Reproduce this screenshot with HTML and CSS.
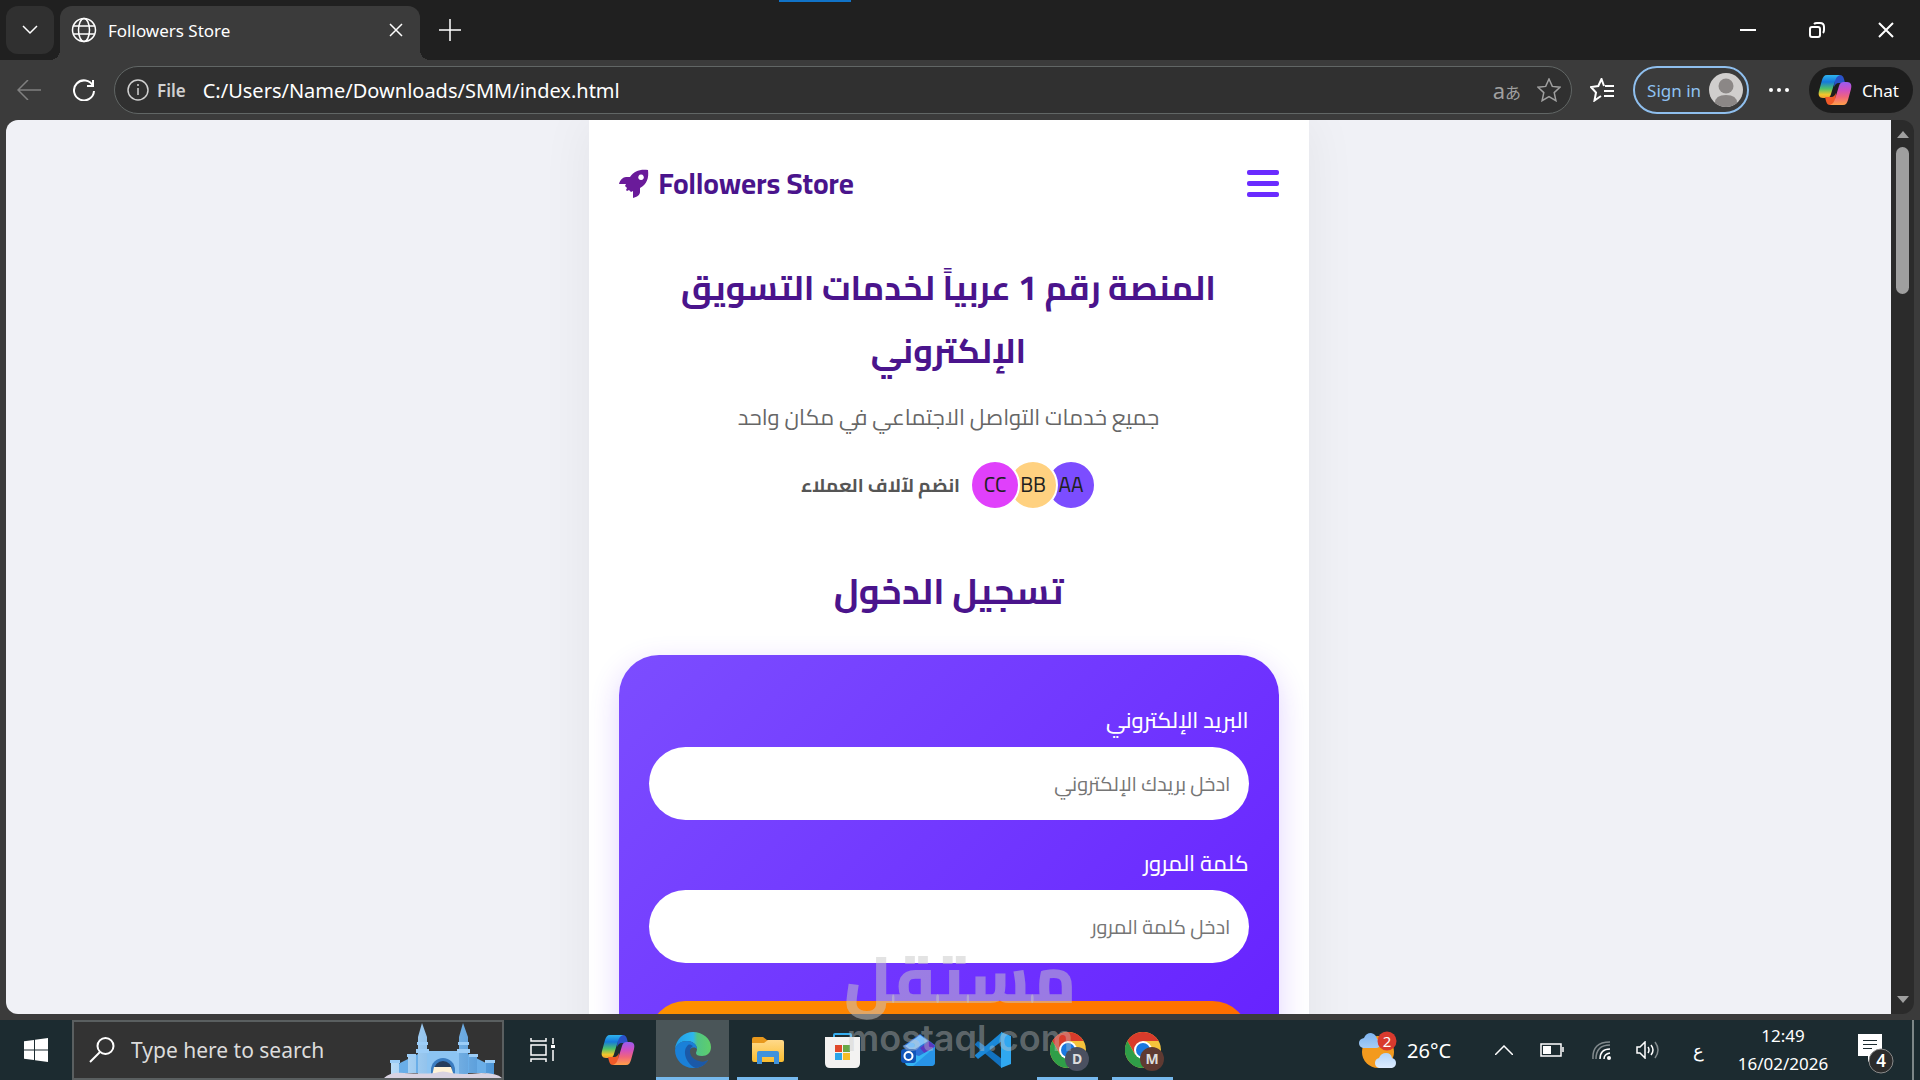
FILE: index.html
```html
<!DOCTYPE html>
<html lang="en">
<head>
<meta charset="utf-8">
<meta name="viewport" content="width=device-width, initial-scale=1">
<title>Followers Store</title>
<link rel="stylesheet" href="styles.css">
</head>
<body>
<svg class="defs" aria-hidden="true">
  <defs>
    <linearGradient id="cp-left" x1="0" y1="0" x2="0" y2="1"><stop offset="0" stop-color="#2fb4ee"/><stop offset=".3" stop-color="#1579dc"/><stop offset=".6" stop-color="#4fc268"/><stop offset=".85" stop-color="#f2c62c"/><stop offset="1" stop-color="#f0a030"/></linearGradient>
    <linearGradient id="cp-right" x1="0" y1="0" x2="0" y2="1"><stop offset="0" stop-color="#9a5cf0"/><stop offset=".35" stop-color="#d04fc0"/><stop offset=".65" stop-color="#f0657c"/><stop offset="1" stop-color="#ffa048"/></linearGradient>
    <linearGradient id="edge-top" x1="0" y1="0" x2="1" y2="0"><stop offset="0" stop-color="#1f9fe8"/><stop offset=".5" stop-color="#2eb5ef"/><stop offset=".62" stop-color="#50c486"/><stop offset="1" stop-color="#5fcf6a"/></linearGradient>
    <linearGradient id="folder" x1="0" y1="0" x2="0" y2="1"><stop offset="0" stop-color="#ffd98a"/><stop offset="1" stop-color="#fbbd2e"/></linearGradient>
    <linearGradient id="tower" x1="0" y1="0" x2="1" y2="0"><stop offset="0" stop-color="#b9dcf8"/><stop offset="1" stop-color="#4b94d6"/></linearGradient>
    <linearGradient id="cloud" x1="0" y1="0" x2="0" y2="1"><stop offset="0" stop-color="#7db4f0"/><stop offset="1" stop-color="#dcecff"/></linearGradient>
    <symbol id="copilot" viewBox="0 0 34 32">
      <path fill="#2a52c8" d="M17 1h5c2 0 3 1 4 4l1 4h-6c-3 0-4 2-5 4z"/>
      <path fill="url(#cp-left)" d="M9 1h13c-3 1-4 3-5 6l-4 13c-1 3-2 4-5 4H5c-4 0-5-3-4-7L4 6c1-3 2-5 5-5z"/>
      <path fill="#f05a28" d="M17 31h-5c-2 0-3-1-4-4l-1-4h6c3 0 4-2 5-4z"/>
      <path fill="url(#cp-right)" d="M25 31H12c3-1 4-3 5-6l4-13c1-3 2-4 5-4h3c4 0 5 3 4 7l-3 11c-1 3-2 5-5 5z"/>
    </symbol>
    <symbol id="chrome" viewBox="0 0 36 36">
      <circle cx="18" cy="18" r="18" fill="#f5c33b"/>
      <path fill="#d93b2b" d="M2.400 9A18 18 0 0 1 33.600 9H18L10 22z"/>
      <path fill="#2f9e48" d="M2.400 9A18 18 0 0 0 18 36l8-13.500-16 0z"/>
      <circle cx="18" cy="18" r="9" fill="#fff"/><circle cx="18" cy="18" r="7" fill="#1a78e0"/>
    </symbol>
  </defs>
</svg>

<header class="tabstrip">
  <button class="tab-list" aria-label="Tab actions"><svg width="16" height="10" viewBox="0 0 16 10"><path class="line" d="M1 1l7 7 7-7"/></svg></button>
  <div class="tab">
    <svg width="26" height="26" viewBox="0 0 26 26"><g class="line"><circle cx="13" cy="13" r="11.500"/><ellipse cx="13" cy="13" rx="5.500" ry="11.500"/><path d="M2.500 9h21M2.500 17h21"/></g></svg>
    <span class="tab-title">Followers Store</span>
    <button class="plain" aria-label="Close tab"><svg width="14" height="14" viewBox="0 0 14 14"><path class="line" d="M1 1l12 12M13 1L1 13"/></svg></button>
  </div>
  <button class="plain new-tab" aria-label="New tab"><svg width="22" height="22" viewBox="0 0 22 22"><path class="line" d="M11 0v22M0 11h22"/></svg></button>
  <div class="window-controls">
    <button class="plain" aria-label="Minimize"><svg width="16" height="16" viewBox="0 0 16 16"><path class="line bold" d="M0 8h16"/></svg></button>
    <button class="plain" aria-label="Restore"><svg width="16" height="16" viewBox="0 0 16 16"><g class="line bold"><rect x="1" y="5" width="10" height="10" rx="2"/><path d="M5 2q1-1 3-1h3q4 0 4 4v3q0 2-1 3"/></g></svg></button>
    <button class="plain" aria-label="Close"><svg width="16" height="16" viewBox="0 0 16 16"><path class="line bold" d="M1 1l14 14M15 1L1 15"/></svg></button>
  </div>
  <span class="drag-mark"></span>
</header>

<nav class="toolbar">
  <button class="plain back" aria-label="Back"><svg width="24" height="20" viewBox="0 0 24 20"><path class="line" d="M24 10H1M11 0L1 10l10 10"/></svg></button>
  <button class="plain reload" aria-label="Reload"><svg width="22" height="22" viewBox="0 0 22 22"><path class="line bold" d="M20 7A10 10 0 1 0 21 12M20 1v6h-6"/></svg></button>
  <div class="address">
    <svg width="22" height="22" viewBox="0 0 22 22"><g class="line"><circle cx="11" cy="11" r="10"/><path d="M11 9v7M11 5v2"/></g></svg>
    <span class="scheme">File</span>
    <input class="url" type="text" aria-label="Address" value="C:/Users/Name/Downloads/SMM/index.html">
    <span class="translate">a<small>あ</small></span>
    <button class="plain dim" aria-label="Add to favorites"><svg width="24" height="24" viewBox="0 0 24 24"><path class="line" d="M12 1l3.300 7.400 7.700.8-5.800 5.400 1.700 8.100L12 18.600l-6.900 4.100 1.700-8.100L1 9.200l7.700-.8z"/></svg></button>
  </div>
  <button class="plain favorites" aria-label="Favorites"><svg width="25" height="24" viewBox="0 0 25 24"><path class="line bold" d="M14 8l-2.500-7-3.200 7L1 9l5 5.500-1.500 8L11 18M15 8h9M14 13h10M14 18h10"/></svg></button>
  <button class="signin">Sign in<svg width="34" height="34" viewBox="0 0 34 34"><circle cx="17" cy="17" r="17" fill="#d0cecd"/><circle cx="17" cy="13" r="7.500" fill="#8b8786"/><path fill="#8b8786" d="M6 30q0-8 11-8t11 8q-5 4-11 4T6 30z"/></svg></button>
  <button class="plain more" aria-label="Settings and more"><svg width="20" height="4" viewBox="0 0 20 4" fill="#fff"><circle cx="2" cy="2" r="2"/><circle cx="10" cy="2" r="2"/><circle cx="18" cy="2" r="2"/></svg></button>
  <button class="chat"><svg width="34" height="32"><use href="#copilot"/></svg>Chat</button>
</nav>

<div class="viewport">
  <div class="page" dir="rtl" lang="ar">
    <main class="app">
      <div class="app-head">
        <button class="menu" aria-label="القائمة"><i></i><i></i><i></i></button>
        <a class="brand" href="#" dir="ltr"><svg width="30" height="30" viewBox="0 0 30 30"><path fill="#6a1b9a" fill-rule="evenodd" d="M29 1c1 8-1 14-8 18v4c0 3-3 5-7 6v-7l-2 1-2-2-2 1-1-1 1-2-2-2 1-2H0c1-4 4-7 7-7h4C15 2 21 0 29 1zM22 5.500a2.800 2.800 0 1 0 .1 0z"/></svg>Followers Store</a>
      </div>
      <section class="hero">
        <h1>المنصة رقم 1 عربياً لخدمات التسويق الإلكتروني</h1>
        <p class="lead">جميع خدمات التواصل الاجتماعي في مكان واحد</p>
        <div class="social">
          <div class="avatars"><span class="avatar violet">AA</span><span class="avatar amber">BB</span><span class="avatar pink">CC</span></div>
          <span class="join">انضم لآلاف العملاء</span>
        </div>
      </section>
      <h2>تسجيل الدخول</h2>
      <form class="login">
        <label for="email">البريد الإلكتروني</label>
        <input id="email" type="text" placeholder="ادخل بريدك الإلكتروني">
        <label for="password">كلمة المرور</label>
        <input id="password" type="password" placeholder="ادخل كلمة المرور">
        <button type="button" aria-label="دخول"></button>
      </form>
    </main>
  </div>
  <div class="scrollbar">
    <svg width="12" height="7" viewBox="0 0 12 7"><path fill="#9f9f9f" d="M6 0l6 7H0z"/></svg>
    <span class="thumb"></span>
    <svg width="12" height="7" viewBox="0 0 12 7"><path fill="#9f9f9f" d="M0 0h12L6 7z"/></svg>
  </div>
</div>

<footer class="taskbar">
  <button class="plain start" aria-label="Start"><svg width="24" height="24" viewBox="0 0 24 24" fill="#fff"><path d="M0 3.300L10 2v9.500H0zM11 1.800L24 0v11.500H11zM0 12.500h10V22L0 20.700zM11 12.500h13V24l-13-1.800z"/></svg></button>
  <div class="search">
    <svg width="26" height="26" viewBox="0 0 26 26"><g class="line bold"><circle cx="16.500" cy="9" r="8"/><path d="M11 15L1 25"/></g></svg>
    <input type="text" aria-label="Search" placeholder="Type here to search">
    <svg class="castle" width="118" height="55" viewBox="0 0 118 55">
      <path fill="#8cc4f2" d="M34 28h48v24H34z"/><path fill="#6aaee8" d="M8 44l26-13v19H8zM110 44L84 31v19h26z"/>
      <path fill="url(#tower)" d="M7 38h8v13H7zM24 32h8v18h-8zM85 32h8v18h-8zM102 38h8v13h-8zM34 17h9v34h-9zM75 17h9v34h-9zM38 0l5 14v5h-9v-5zM79 0l5 14v5h-9v-5z"/>
      <path fill="#9ccdf7" d="M6 37h10v3H6zM23 31h9v3h-9zM85 31h9v3h-9zM101 37h10v3h-10zM33 19h11v3H33zM32 26h13v4H32zM74 19h11v3H74zM73 26h13v4H73z"/>
      <path fill="#3a7cc0" d="M47 51V47a12 12 0 0 1 24 0v4z"/><path fill="#263d5c" d="M50 51v-4a9 9 0 0 1 18 0v4z"/><path fill="#fff3d8" d="M50 44h17l3 9H48z"/>
      <path fill="#d9d3e2" d="M0 55q6-6 20-5 20 1 31 0 8-3 16 0 12 2 30 0 16 0 21 5z"/>
    </svg>
  </div>
  <div class="apps">
    <button class="app-btn" aria-label="Task View"><svg width="25" height="24" viewBox="0 0 25 24"><path class="line" d="M1 0v3h15V0M1 24v-3h15v3M1 7h15v10H1zM23 0v6M23 12v11"/><path fill="#fff" d="M21 7h4v3h-4z"/></svg></button>
    <button class="app-btn" aria-label="Copilot"><svg width="34" height="32"><use href="#copilot"/></svg></button>
    <button class="app-btn running active" aria-label="Microsoft Edge"><svg width="36" height="36" viewBox="0 0 36 36">
      <path fill="url(#edge-top)" d="M0 17C1 7 9 0 18 0c10 0 18 7 18 15 0 6-4 9-9 9-4 0-6-1-6-3 0-1 1-2 1-4 0-5-5-8-10-8C6 9 2 12 0 17z"/>
      <path fill="#1a80d8" d="M0 18C1 12 6 9 12 9c6 0 10 4 10 8-1-2-8-3-8 4 0 6 5 10 11 10 3 0 5-1 8-3-3 5-8 8-15 8C8 36 0 28 0 18z"/>
      <path fill="#1b59a8" d="M13 13c-3 3-4 7-2 13 2 5 6 9 10 10 6-1 10-4 12-8-3 2-6 2-9 1-7-2-9-6-9-10 0-2 1-4 3-5-2-1-3-2-5-1z"/>
    </svg></button>
    <button class="app-btn running" aria-label="File Explorer"><svg width="32" height="27" viewBox="0 0 32 27"><path fill="#e8981c" d="M0 2q0-2 2-2h9l4 3h15v7H0z"/><path fill="url(#folder)" d="M0 6h12l4-3h14q2 0 2 2v18q0 2-2 2H2q-2 0-2-2z"/><path fill="#3f92dc" d="M5 16q0-2 2-2h18q2 0 2 2v11h-5v-7H10v7H5z"/></svg></button>
    <button class="app-btn" aria-label="Store"><svg width="35" height="35" viewBox="0 0 35 35"><path fill="none" stroke="#35aef0" stroke-width="2" d="M9 7V2q0-1 1-1h15q1 0 1 1v5"/><path fill="#f3f2f1" d="M0 4h35v26q0 5-5 5H5q-5 0-5-5z"/><path fill="#e0492a" d="M10 12h7v7h-7z"/><path fill="#6aa845" d="M18 12h7v7h-7z"/><path fill="#2ba5e8" d="M10 20h7v7h-7z"/><path fill="#f5bd28" d="M18 20h7v7h-7z"/></svg></button>
    <button class="app-btn" aria-label="Outlook"><svg width="34" height="32" viewBox="0 0 34 32"><path fill="#2d6fd8" d="M2 12L19 0l15 11v4L15 26z"/><path fill="#7fc0f8" d="M4 12L19 1l8 6-16 10z"/><path fill="#5a38c0" d="M19 14l9-7 6 5-9 9z"/><path fill="#35b4f4" d="M4 18l14 4 16-9v15q0 4-4 4H8q-4 0-4-4z"/><path fill="#1f7fe0" d="M34 13v15q0 4-4 4H12z" opacity=".6"/><rect y="15" width="15" height="14" rx="3" fill="#1055b8"/><circle cx="7.500" cy="22" r="4" fill="none" stroke="#fff" stroke-width="2"/></svg></button>
    <button class="app-btn" aria-label="Visual Studio Code"><svg width="36" height="36" viewBox="0 0 36 36"><path fill="#1272c0" d="M0 12l3-3 24 18v9L0 13z"/><path fill="#1a88d8" d="M0 24l3 3L27 9V0L0 23z"/><path fill="#30a8f0" d="M26 0l10 4v28l-10 4z"/></svg></button>
    <button class="app-btn running" aria-label="Chrome, profile D"><svg width="36" height="36"><use href="#chrome"/></svg><span class="profile slate">D</span></button>
    <button class="app-btn running" aria-label="Chrome, profile M"><svg width="36" height="36"><use href="#chrome"/></svg><span class="profile brown">M</span></button>
  </div>
  <div class="tray">
    <button class="plain weather"><svg width="38" height="38" viewBox="0 0 38 38"><circle cx="19" cy="21" r="16" fill="#f39a1e"/><path fill="url(#cloud)" d="M4 17q-4-1-4-5t5-5q2-5 7-5 5 1 6 6 3 1 3 5t-4 4zM20 37q-4-1-4-5t4-5q2-5 7-5t6 5q4 1 4 5t-4 5z"/><circle cx="28" cy="10" r="9.500" fill="#d93a2e"/><text x="28" y="16" class="weather-count">2</text></svg>26°C</button>
    <button class="plain chevron" aria-label="Hidden icons"><svg width="18" height="10" viewBox="0 0 18 10"><path class="line" d="M0 10l9-9 9 9"/></svg></button>
    <button class="plain battery" aria-label="Battery"><svg width="24" height="14" viewBox="0 0 24 14"><path class="line" d="M1 1h20v12H1zM23 4v5"/><path fill="#fff" d="M3 3h8v8H3z"/></svg></button>
    <button class="plain wifi" aria-label="Network"><svg width="19" height="19" viewBox="0 0 19 19"><circle cx="17" cy="17" r="2" fill="#fff"/><path class="line" d="M12 18q0-5 6-6M8 18Q8 8 18 8"/><path class="line faint" d="M4 18Q4 4 18 4M1 18Q0 1 18 1"/></svg></button>
    <button class="plain volume" aria-label="Volume"><svg width="23" height="18" viewBox="0 0 23 18"><path class="line" d="M1 6h3l5-5v16l-5-5H1zM12 6q2 3 0 6M15 4q4 5 0 10"/><path class="line faint" d="M19 1q6 8 0 16"/></svg></button>
    <button class="plain language" lang="ar">ع</button>
    <button class="plain clock"><span>12:49</span><span>16/02/2026</span></button>
    <button class="plain notices" aria-label="Notifications"><svg width="36" height="42" viewBox="0 0 36 42"><path fill="#fff" d="M0 1h24v22H16l-6 6v-6H0z"/><path stroke="#1c2b30" stroke-width="1" d="M5 7.500h14M5 11.500h14M5 15.500h9"/><circle cx="23" cy="28" r="12" fill="#2b2b2b" stroke="#8a8a8a"/><text x="23" y="34" class="notice-count">4</text></svg></button>
    <span class="show-desktop"></span>
  </div>
</footer>

<div class="watermark" aria-hidden="true"><span class="wm-ar" lang="ar">مستقل</span><span class="wm-en">mostaql.com</span></div>
</body>
</html>
```
FILE: styles.css
```css
* { box-sizing: border-box; }

body {
  margin: 0;
  height: 100vh;
  display: flex;
  flex-direction: column;
  overflow: hidden;
  background: #3b3b3b;
  color: #fff;
  font-family: "Noto Sans", "Open Sans", sans-serif;
}

button, input { font: inherit; color: inherit; border: 0; padding: 0; background: none; outline: 0; }
svg { flex: none; display: block; }
.defs { position: absolute; width: 0; height: 0; }
.line { fill: none; stroke: currentColor; stroke-width: 1.5; }
.line.bold { stroke-width: 2; }
.line.faint { opacity: .45; }
.plain { display: flex; align-items: center; justify-content: center; }

/* Browser tabs */
.tabstrip { position: relative; display: flex; flex: none; height: 60px; padding: 6px 0 0 6px; background: #202020; }
.tab-list { display: flex; align-items: center; justify-content: center; width: 48px; height: 48px; margin-right: 6px; border-radius: 12px; background: #303030; }
.tab { position: relative; display: flex; align-items: center; gap: 11px; width: 360px; padding: 0 17px 6px 11px; border-radius: 12px 12px 0 0; background: #3b3b3b; }
.tab::before, .tab::after { content: ""; position: absolute; bottom: 0; width: 10px; height: 10px; }
.tab::before { right: 100%; background: radial-gradient(circle at 0 0, transparent 10px, #3b3b3b 10px); }
.tab::after { left: 100%; background: radial-gradient(circle at 100% 0, transparent 10px, #3b3b3b 10px); }
.tab-title { flex: 1; font-size: 17px; }
.new-tab { width: 60px; height: 48px; }
.window-controls { display: flex; margin-left: auto; height: 48px; }
.window-controls .plain { width: 69px; }
.drag-mark { position: absolute; top: 0; left: 779px; width: 72px; height: 2px; background: #1173c8; }

/* Address bar */
.toolbar { display: flex; flex: none; align-items: center; height: 60px; padding: 0 7px 0 0; }
.back { width: 58px; color: #808080; }
.reload { width: 52px; }
.address { display: flex; flex: 1; align-items: center; height: 48px; margin-left: 4px; padding: 0 10px 0 12px; border: 1px solid #616665; border-radius: 24px; background: #303030; color: #d0d0d0; }
.scheme { margin: 0 17px 0 8px; font-size: 17px; font-weight: 600; }
.url { flex: 1; min-width: 0; font-size: 20px; color: #fff; }
.translate { margin-right: 16px; font-size: 22px; color: #a0a0a0; }
.translate small { font: 16px "Noto Sans CJK JP", sans-serif; }
.dim { color: #a0a0a0; }
.favorites { width: 61px; }
.signin { display: flex; align-items: center; gap: 8px; height: 48px; padding: 0 4px 0 12px; border: 2px solid #8fbfee; border-radius: 24px; color: #8fc2f2; font-size: 17px; }
.more { width: 60px; }
.chat { display: flex; align-items: center; gap: 10px; height: 46px; padding: 0 14px 0 9px; border-radius: 23px; background: #1d1d1d; font-size: 17px; }

/* Page area */
.viewport { display: flex; flex: 1; min-height: 0; margin: 0 6px; border-radius: 12px; overflow: hidden; }
.page { flex: 1; overflow: hidden; background: #f0f1f6; font-family: Cairo, "Noto Sans", "DejaVu Sans", sans-serif; }
.scrollbar { display: flex; flex-direction: column; align-items: center; width: 23px; padding: 11px 0; background: #2b2b2b; }
.thumb { width: 13px; height: 147px; margin: 9px 0 auto; border-radius: 7px; background: #9f9f9f; }

.app { max-width: 720px; min-height: 100%; margin: 0 auto; padding: 30px; background: #fff; box-shadow: 0 0 50px rgba(0, 0, 0, .06); }
.app-head { display: flex; align-items: center; justify-content: space-between; height: 67px; }
.menu { display: flex; flex-direction: column; gap: 6px; }
.menu i { width: 32px; height: 5px; border-radius: 2px; background: #6a2bff; }
.brand { display: flex; align-items: center; gap: 10px; color: #4a148c; font-size: 29px; font-weight: 700; text-decoration: none; }

.hero { margin-top: 39px; text-align: center; }
h1, h2, p { margin: 0; }
h1 { color: #4a148c; font-size: 34px; line-height: 63px; }
.lead { margin-top: 15px; color: #666; font-size: 22px; line-height: 41px; }
.social { display: flex; align-items: center; justify-content: center; gap: 10px; margin-top: 22px; }
.avatars { display: flex; }
.avatar { width: 50px; height: 50px; border: 2px solid #fff; border-radius: 50%; color: #212121; font-size: 21px; line-height: 46px; }
.avatar + .avatar { margin-right: -12px; }
.violet { background: #7c4dff; }
.amber { background: #ffd180; }
.pink { background: #e040fb; }
.join { color: #555; font-size: 19px; font-weight: 700; }
h2 { margin-top: 48px; color: #4a148c; font-size: 36px; line-height: 67px; text-align: center; }

.login { display: flex; flex-direction: column; margin-top: 30px; padding: 45px 30px; border-radius: 40px; background: linear-gradient(135deg, #7c4dff, #651fff); box-shadow: 0 10px 30px rgba(101, 31, 255, .2); }
.login label { margin-bottom: 6px; font-size: 22px; font-weight: 500; line-height: 41px; }
.login input { height: 73px; margin-bottom: 23px; padding: 0 18px; border-radius: 37px; background: #fff; color: #333; font-size: 20px; }
.login input::placeholder { color: #757575; }
.login button { height: 73px; margin-top: 15px; border-radius: 37px; background: linear-gradient(90deg, #ff9100, #ff6d00); }

/* Taskbar */
.taskbar { display: flex; flex: none; height: 60px; margin-top: 6px; background: #1c2b30; }
.start { width: 72px; }
.search { display: flex; align-items: center; width: 432px; padding-left: 15px; border: 2px solid #5a5f60; background: #333; }
.search input { flex: 1; min-width: 0; padding-left: 16px; font-size: 21px; }
.search input::placeholder { color: #dcdcdc; }
.castle { align-self: flex-end; }
.apps { display: flex; gap: 2px; padding-left: 2px; }
.app-btn { position: relative; display: flex; align-items: center; justify-content: center; width: 73px; }
.running::after { content: ""; position: absolute; bottom: 0; left: 6px; right: 6px; height: 3px; background: #76b9ed; }
.active { background: #4a5558; }
.active::after { left: 0; right: 0; }
.profile { position: absolute; left: 34px; top: 27px; width: 24px; height: 24px; border-radius: 50%; color: #ddd; font-size: 14px; font-weight: 700; line-height: 24px; }
.slate { background: #4a5060; }
.brown { background: #5f3a32; }
.tray { display: flex; margin-left: auto; }
.weather { justify-content: flex-start; gap: 10px; width: 123px; font-size: 20px; }
.weather-count { fill: #fff; font-size: 15px; text-anchor: middle; }
.chevron { width: 44px; }
.battery { width: 52px; }
.wifi, .volume { width: 46px; }
.language { width: 56px; font-size: 18px; }
.clock { flex-direction: column; width: 114px; font-size: 17px; line-height: 28px; }
.notices { width: 72px; padding-top: 8px; }
.notice-count { fill: #fff; font-size: 17px; font-weight: 600; text-anchor: middle; }
.show-desktop { width: 8px; border-left: 2px solid #7d8688; }

/* Watermark laid over the screen */
.watermark { position: absolute; left: 0; right: 0; bottom: 20px; display: flex; flex-direction: column; align-items: center; pointer-events: none; }
.wm-ar { color: rgba(200, 200, 200, .5); font: 800 66px/74px Cairo, "DejaVu Sans", sans-serif; }
.wm-en { color: rgba(200, 200, 200, .4); font: 600 36px/44px Inter, sans-serif; }
```
